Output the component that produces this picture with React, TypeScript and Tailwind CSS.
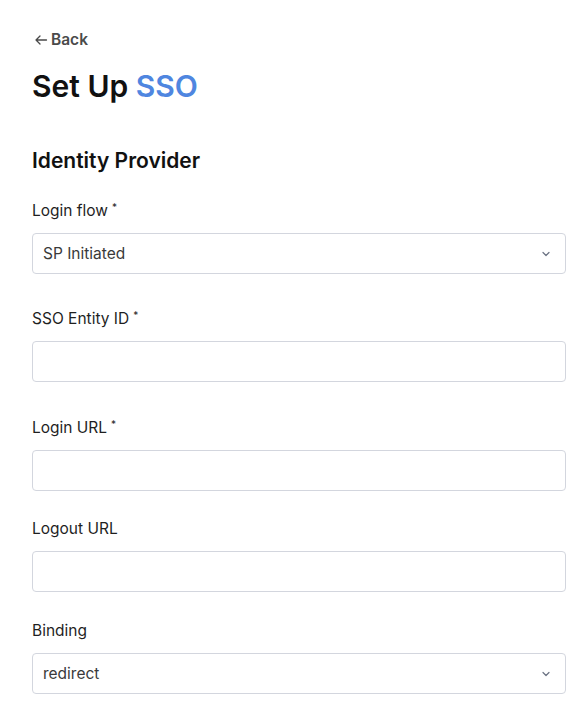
import React from "react";

const Chevron = () => (
  <svg width="10" height="10" viewBox="0 0 10 10" fill="none" className="text-gray-500">
    <path d="M2 3.5L5 6.5L8 3.5" stroke="currentColor" strokeWidth="1.2" strokeLinecap="round" strokeLinejoin="round" />
  </svg>
);

function Label({ text, required }: { text: string; required?: boolean }) {
  return (
    <label className="block text-[15.5px] leading-5 text-[#1f1f1f]">
      {text}
      {required && <sup className="ml-1 text-[10px] text-[#1f1f1f]">*</sup>}
    </label>
  );
}

function Select({ value }: { value: string }) {
  return (
    <div className="mt-3 flex h-[41px] items-center justify-between rounded border border-[#d3d6de] bg-white px-[10px] text-[15.5px] text-[#3a3a3a]">
      <span>{value}</span>
      <span className="mr-1"><Chevron /></span>
    </div>
  );
}

function Input() {
  return <div className="mt-3 h-[41px] rounded border border-[#d3d6de] bg-white" />;
}

export default function App() {
  return (
    <div className="min-h-screen bg-white pl-8 pr-4 pt-[28px]" style={{ fontFamily: "Inter, Lato, sans-serif" }}>
      <div className="ml-[2px] flex items-center gap-[3px] text-[15.5px] font-semibold text-[#4a4a4a]">
        <svg width="14" height="14" viewBox="0 0 14 14" fill="none">
          <path d="M12.5 7H2M6 3L2 7L6 11" stroke="currentColor" strokeWidth="1.3" strokeLinecap="round" strokeLinejoin="round" />
        </svg>
        <span>Back</span>
      </div>
      <h1 className="mt-[17px] text-[30px] font-semibold leading-9 text-[#111]">
        Set Up <span className="text-[#4f86e0]">SSO</span>
      </h1>
      <h2 className="mt-[43px] text-[21px] font-semibold leading-7 text-[#111]">Identity Provider</h2>
      <div className="mt-[26px]">
        <Label text="Login flow" required />
        <Select value="SP Initiated" />
      </div>
      <div className="mt-[35px]">
        <Label text="SSO Entity ID" required />
        <Input />
      </div>
      <div className="mt-[36px]">
        <Label text="Login URL" required />
        <Input />
      </div>
      <div className="mt-[28px]">
        <Label text="Logout URL" />
        <Input />
      </div>
      <div className="mt-[29px]">
        <Label text="Binding" />
        <Select value="redirect" />
      </div>
    </div>
  );
}
